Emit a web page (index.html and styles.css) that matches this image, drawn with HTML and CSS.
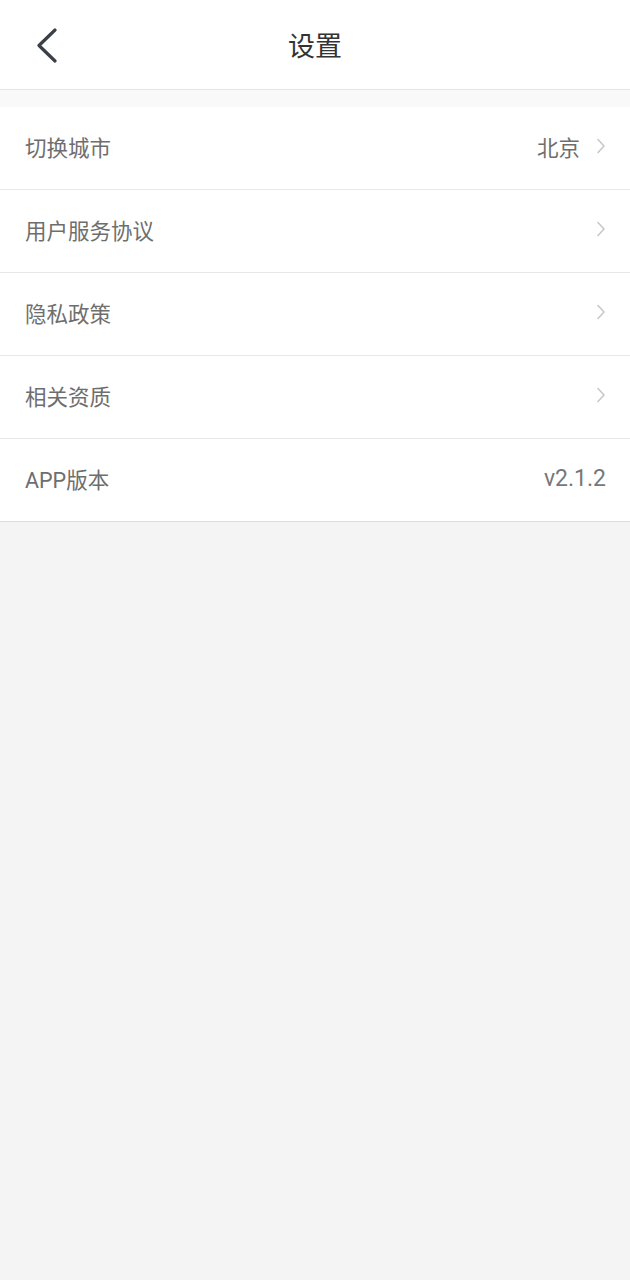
FILE: index.html
```html
<!DOCTYPE html>
<html lang="zh-CN">
<head>
<meta charset="utf-8">
<link rel="stylesheet" href="styles.css">
</head>
<body>
<header class="topbar">
  <div class="back">
    <svg width="24" height="36" viewBox="0 0 24 36"><polyline points="19,2 3,17.5 19,33" fill="none" stroke="#3b3f46" stroke-width="3.2" stroke-linecap="round" stroke-linejoin="round"/></svg>
  </div>
  <div class="title">设置</div>
  <div class="spacer"></div>
</header>
<div class="band"></div>
<ul class="list">
  <li class="row"><span class="label">切换城市</span><span class="right"><span class="value">北京</span><span class="chev"><svg width="10" height="16" viewBox="0 0 10 16"><polyline points="2,1.5 8,8 2,14.5" fill="none" stroke="#c8c8c8" stroke-width="1.6" stroke-linecap="round" stroke-linejoin="round"/></svg></span></span></li>
  <li class="row"><span class="label">用户服务协议</span><span class="right"><span class="chev"><svg width="10" height="16" viewBox="0 0 10 16"><polyline points="2,1.5 8,8 2,14.5" fill="none" stroke="#c8c8c8" stroke-width="1.6" stroke-linecap="round" stroke-linejoin="round"/></svg></span></span></li>
  <li class="row"><span class="label">隐私政策</span><span class="right"><span class="chev"><svg width="10" height="16" viewBox="0 0 10 16"><polyline points="2,1.5 8,8 2,14.5" fill="none" stroke="#c8c8c8" stroke-width="1.6" stroke-linecap="round" stroke-linejoin="round"/></svg></span></span></li>
  <li class="row"><span class="label">相关资质</span><span class="right"><span class="chev"><svg width="10" height="16" viewBox="0 0 10 16"><polyline points="2,1.5 8,8 2,14.5" fill="none" stroke="#c8c8c8" stroke-width="1.6" stroke-linecap="round" stroke-linejoin="round"/></svg></span></span></li>
  <li class="row"><span class="label">APP版本</span><span class="right"><span class="value version">v2.1.2</span></span></li>
</ul>
</body>
</html>
```
FILE: styles.css
```css
html, body {
  margin: 0;
  padding: 0;
}
body {
  background: #f4f4f4;
  font-family: Roboto, "Noto Sans CJK SC", "Noto Sans", sans-serif;
  min-height: 1280px;
}
.topbar {
  height: 89px;
  background: #fff;
  border-bottom: 1px solid #e6e6e6;
  display: flex;
  align-items: center;
  padding: 0 36px 0 36px;
}
.back {
  width: 60px;
  display: flex;
  align-items: center;
  padding-top: 2px;
}
.back svg { display: block; }
.title {
  flex: 1;
  text-align: center;
  font-size: 27px;
  color: #333;
  margin-top: 0;
}
.spacer { width: 60px; }
.band {
  height: 17px;
  background: #f9f9f9;
}
.list {
  list-style: none;
  margin: 0;
  padding: 0;
  background: #fff;
  border-bottom: 1px solid #dedede;
}
.row {
  display: flex;
  align-items: center;
  justify-content: space-between;
  padding: 0 24px 3px 25px;
  box-sizing: border-box;
  height: 83px;
  border-bottom: 1px solid #e8e8e8;
  font-size: 21.5px;
  color: #6e6e6e;
}
.row:last-child {
  border-bottom: none;
  height: 82px;
}
.right {
  display: flex;
  align-items: center;
}
.value {
  color: #6e6e6e;
}
.version {
  font-size: 23px;
  color: #777;
}
.chev {
  display: flex;
  margin-left: 16px;
  margin-top: -1px;
}
.chev svg { display: block; }
```
